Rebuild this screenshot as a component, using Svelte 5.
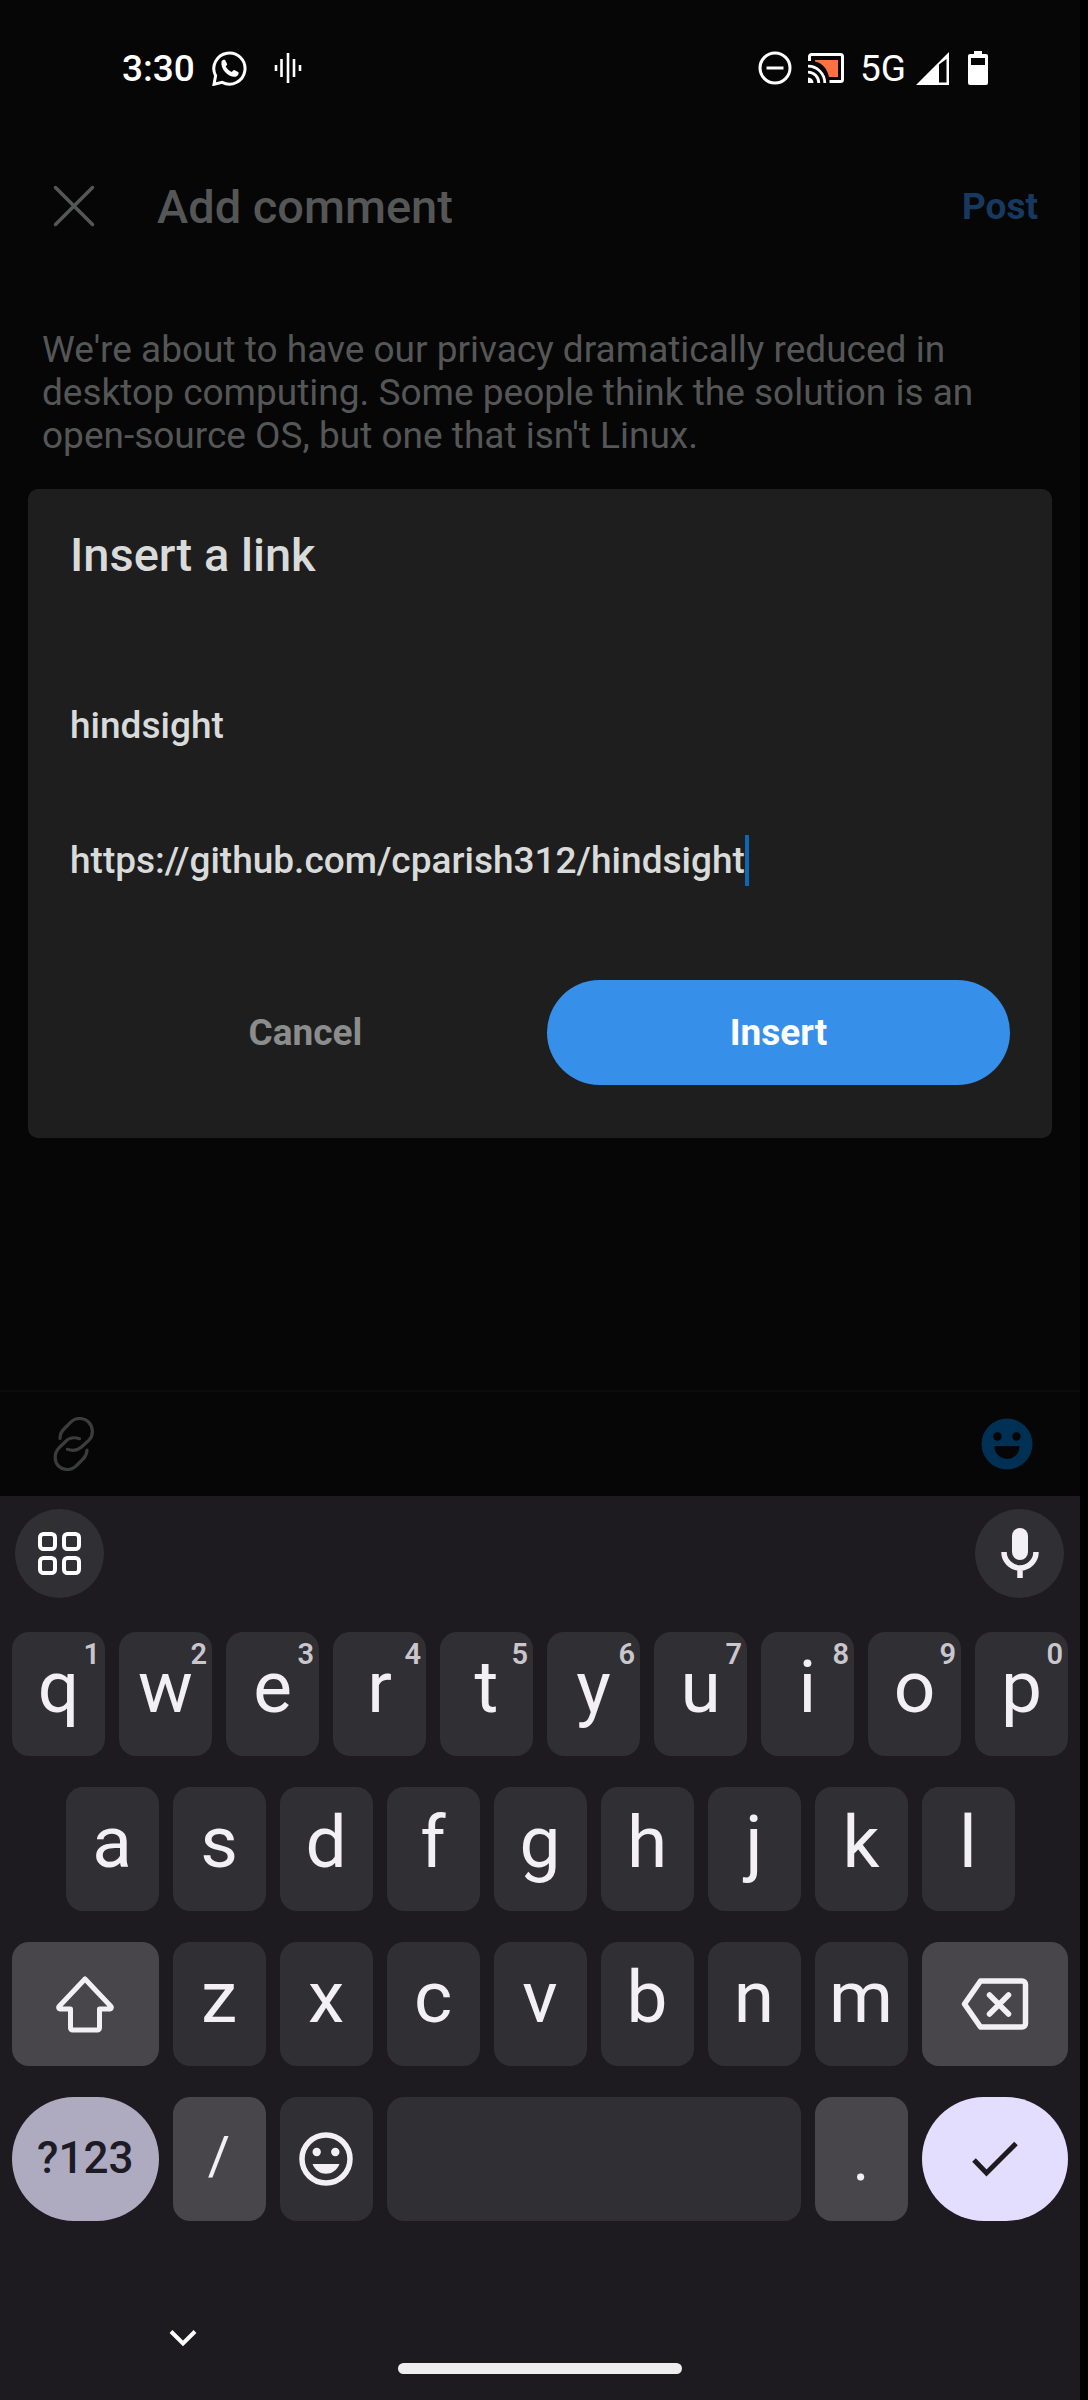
<script>
  const numberRow = [
    ['q', '1'], ['w', '2'], ['e', '3'], ['r', '4'], ['t', '5'],
    ['y', '6'], ['u', '7'], ['i', '8'], ['o', '9'], ['p', '0']
  ];
  const homeRow = ['a', 's', 'd', 'f', 'g', 'h', 'j', 'k', 'l'];
  const bottomRow = ['z', 'x', 'c', 'v', 'b', 'n', 'm'];

  let linkText = $state('hindsight');
  let linkUrl = $state('https://github.com/cparish312/hindsight');
  let comment = $state(
    "We're about to have our privacy dramatically reduced in desktop computing. Some people think the solution is an open-source OS, but one that isn't Linux."
  );
</script>

<div class="phone">
  <div class="app">
    <header class="status">
      <div class="status-group">
        <span class="clock">3:30</span>
        <svg class="whatsapp" width="36" height="36" viewBox="0 0 36 36" aria-hidden="true">
          <path d="M2 34.3 L3.6 25.8 A15.6 15.6 0 1 1 10.2 32.4 Z" fill="none" stroke="#fff" stroke-width="3" />
          <path d="M9.5 11.5c.8-1.8 2.6-2.2 3.6-1.6l2 4.2c.2.8-.8 1.800-1.400 2.500 1.500 2.700 3.300 4.300 6 5.500.8-.8 1.700-2.200 2.600-2l4.200 2.100c.6 2.600-1.500 4.400-4 4.600-6.500 0-14.300-7.800-13-15.300z" fill="#fff" />
        </svg>
        <svg width="28" height="32" viewBox="0 0 28 32" aria-hidden="true">
          <path d="M2 13v6M7.500 7v18M14 1v30M20 7v18M26 13v6" stroke="#fff" stroke-width="2.600" />
        </svg>
      </div>
      <div class="status-group end">
        <svg width="34" height="34" viewBox="0 0 34 34" aria-hidden="true">
          <circle cx="17" cy="17" r="15" fill="none" stroke="#fff" stroke-width="3" />
          <path d="M8.500 17h17" stroke="#fff" stroke-width="3" />
        </svg>
        <svg class="cast" width="36" height="30" viewBox="0 0 36 30" aria-hidden="true">
          <path d="M7 7h23v17h-9C19 15 14 10 7 8.500z" fill="#ff7043" />
          <path d="M1.500 8V3.500a2 2 0 0 1 2-2h29a2 2 0 0 1 2 2v23a2 2 0 0 1-2 2H21.500" fill="none" stroke="#fff" stroke-width="3" />
          <path d="M0 13.200A16.800 16.800 0 0 1 16.800 30M0 19.200A10.800 10.800 0 0 1 10.800 30" fill="none" stroke="#fff" stroke-width="2.800" />
          <path d="M0 24.500A5.500 5.500 0 0 1 5.500 30H0z" fill="#fff" />
        </svg>
        <span class="network">5G</span>
        <svg class="signal" width="33" height="33" viewBox="0 0 33 33" aria-hidden="true">
          <path d="M0 33 33 0v33z" fill="#fff" />
          <path d="M23 12.500 30.500 7v23.500H23z" fill="#060606" />
        </svg>
        <svg width="20" height="34" viewBox="0 0 20 34" aria-hidden="true">
          <path d="M6 0h8v3h4a2 2 0 0 1 2 2v27a2 2 0 0 1-2 2H2a2 2 0 0 1-2-2V5a2 2 0 0 1 2-2h4z" fill="#fff" />
          <path d="M3 7h14v7H3z" fill="#060606" />
        </svg>
      </div>
    </header>

    <div class="titlebar">
      <button class="plain" aria-label="Close">
        <svg width="42" height="42" viewBox="0 0 42 42">
          <path d="M2.500 2.500l37 37M39.500 2.500l-37 37" stroke="#555757" stroke-width="3.500" stroke-linecap="round" />
        </svg>
      </button>
      <h1>Add comment</h1>
      <button class="plain post">Post</button>
    </div>

    <textarea class="comment" aria-label="Comment" rows="3" bind:value={comment}></textarea>

    <footer class="tools">
      <button class="plain" aria-label="Add link">
        <svg width="42" height="54" viewBox="0 0 42 54" fill="none" stroke="#3b3c3c" stroke-width="3.200" stroke-linecap="round">
          <path d="M7 21.500C7 17 8.500 14.500 10.500 12.500L17.500 5.500C22.500 0 31 .5 35.500 5S41 18 36 23.200L28.500 30C24.500 33.500 19.500 34 14.500 32.300" />
          <path d="M34 33C33.800 37 32.500 39.500 30.500 41.500L23.500 48.500C18.500 54 10 53.500 5.500 49S1 36 6 30.800L12.500 24.500C16.500 20.500 21.500 20 26.500 21.700" />
        </svg>
      </button>
      <button class="plain" aria-label="Add emoji">
        <svg width="52" height="52" viewBox="0 0 52 52">
          <circle cx="26" cy="26" r="25.500" fill="#013055" />
          <circle cx="16.500" cy="18.500" r="4.200" fill="#060606" />
          <circle cx="35.500" cy="18.500" r="4.200" fill="#060606" />
          <path d="M13.500 28h25c0 17-25 17-25 0z" fill="#060606" />
        </svg>
      </button>
    </footer>

    <div class="overlay">
      <form class="dialog" role="dialog" aria-labelledby="dialog-title" onsubmit={(e) => e.preventDefault()}>
        <h2 id="dialog-title">Insert a link</h2>
        <div class="field">
          <input type="text" aria-label="Link name" bind:value={linkText} />
        </div>
        <div class="field">
          <input type="text" aria-label="Link address" bind:value={linkUrl} />
          <span class="caret"></span>
        </div>
        <div class="actions">
          <button type="button" class="cancel">Cancel</button>
          <button type="submit" class="insert">Insert</button>
        </div>
      </form>
    </div>
  </div>

  <div class="keyboard">
    <div class="strip">
      <button class="round" aria-label="Keyboard menu">
        <svg width="43" height="43" viewBox="0 0 43 43" fill="none" stroke="#fff" stroke-width="4">
          <rect x="2" y="2" width="15" height="15" rx="3.500" />
          <rect x="26" y="2" width="15" height="15" rx="3.500" />
          <rect x="2" y="26" width="15" height="15" rx="3.500" />
          <rect x="26" y="26" width="15" height="15" rx="3.500" />
        </svg>
      </button>
      <button class="round" aria-label="Voice input">
        <svg width="38" height="52" viewBox="0 0 38 52">
          <rect x="11" y="0" width="16" height="32" rx="8" fill="#f2eff5" />
          <path d="M3 24a16 16 0 0 0 32 0M19 40v10" fill="none" stroke="#f2eff5" stroke-width="5.500" />
        </svg>
      </button>
    </div>

    <div class="keys">
      {#each numberRow as [letter, hint]}
        <button class="key">{letter}<small>{hint}</small></button>
      {/each}

      {#each homeRow as letter, i}
        <button class="key" class:indent={i === 0}>{letter}</button>
      {/each}

      <button class="key wide mod shift" aria-label="Shift">
        <svg width="60" height="58" viewBox="0 0 60 58" fill="none" stroke="#f2eff5" stroke-width="5" stroke-linejoin="round">
          <path d="M30 4 56 31.500a1.500 1.500 0 0 1-1 2.500H44.500V53a2 2 0 0 1-2 2h-25a2 2 0 0 1-2-2V34H5a1.500 1.500 0 0 1-1-2.500z" />
        </svg>
      </button>
      {#each bottomRow as letter}
        <button class="key">{letter}</button>
      {/each}
      <button class="key wide mod icon" aria-label="Backspace">
        <svg width="68" height="52" viewBox="0 0 68 52" fill="none" stroke="#f2eff5" stroke-width="5.500" stroke-linejoin="round">
          <path d="M19.500 3H61a3.500 3.500 0 0 1 3.500 3.500v39A3.500 3.500 0 0 1 61 49H19.500L3.500 26z" />
          <path d="M28.500 17l19 19M47.500 17l-19 19" stroke-linecap="round" />
        </svg>
      </button>

      <button class="key wide symbols">?123</button>
      <button class="key mod slash">/</button>
      <button class="key icon" aria-label="Emoji">
        <svg width="54" height="54" viewBox="0 0 54 54">
          <circle cx="27" cy="27" r="24" fill="none" stroke="#f2eff5" stroke-width="5.500" />
          <circle cx="17.700" cy="20" r="4.200" fill="#f2eff5" />
          <circle cx="36.300" cy="20" r="4.200" fill="#f2eff5" />
          <path d="M13.500 32h27c-5 13-22 13-27 0z" fill="#f2eff5" />
        </svg>
      </button>
      <button class="key space" aria-label="Space"></button>
      <button class="key mod dot">.</button>
      <button class="key wide done" aria-label="Done">
        <svg width="46" height="36" viewBox="0 0 46 36">
          <path d="M2 19 14.500 32 44 2.500" fill="none" stroke="#1d1b20" stroke-width="5" />
        </svg>
      </button>
    </div>

    <div class="nav">
      <button class="plain hide" aria-label="Hide keyboard">
        <svg width="28" height="18" viewBox="0 0 28 18">
          <path d="M2 2.500 14 14.500 26 2.500" fill="none" stroke="#fff" stroke-width="4" />
        </svg>
      </button>
      <div class="pill"></div>
    </div>
  </div>
</div>

<style>
  :global(body) {
    background: #000;
  }

  .phone {
    display: flex;
    flex-direction: column;
    box-sizing: border-box;
    min-height: 100vh;
    padding-right: 8px;
    font-family: Roboto, 'Liberation Sans', sans-serif;
  }

  button,
  input,
  textarea {
    margin: 0;
    padding: 0;
    border: 0;
    background: none;
    font-family: inherit;
    outline: none;
  }

  svg {
    display: block;
    flex: none;
  }

  .app {
    position: relative;
    display: flex;
    flex: 1;
    flex-direction: column;
    background: #060606;
  }

  .status {
    display: flex;
    align-items: center;
    justify-content: space-between;
    height: 136px;
    padding: 0 92px 0 122px;
    color: #fff;
  }

  .status-group {
    display: flex;
    align-items: center;
    font-size: 37px;
    font-weight: 500;
  }

  .whatsapp {
    margin: 0 26px 0 17px;
  }

  .network {
    font-weight: 400;
  }

  .cast {
    margin: 0 16px;
  }

  .signal {
    margin: 0 19px 0 10px;
  }

  .titlebar {
    display: flex;
    align-items: center;
    height: 140px;
    padding: 0 42px 0 53px;
  }

  h1 {
    flex: 1;
    margin: 0 0 0 62px;
    color: #555757;
    font-size: 47px;
    font-weight: 500;
  }

  .plain {
    display: block;
  }

  .post {
    color: #17395f;
    font-size: 37px;
    font-weight: 700;
  }

  .comment {
    flex: 1;
    margin: 52px 42px 0;
    overflow: hidden;
    color: #555757;
    font-size: 37px;
    line-height: 43px;
    resize: none;
  }

  .tools {
    display: flex;
    align-items: center;
    justify-content: space-between;
    height: 104px;
    padding: 0 47px 0 53px;
    border-top: 2px solid #0b0b0b;
  }

  .overlay {
    position: absolute;
    inset: 130px 28px 0;
    display: flex;
    align-items: center;
  }

  .dialog {
    flex: 1;
    padding: 36px 42px 53px;
    border-radius: 10px;
    background: #1e1e1e;
  }

  h2 {
    margin: 0 0 89px;
    color: #d9dada;
    font-size: 47px;
    font-weight: 500;
    line-height: 60px;
  }

  .field {
    display: flex;
    align-items: center;
    height: 103px;
    margin-bottom: 32px;
  }

  .field input {
    max-width: 100%;
    height: 52px;
    color: #d9dada;
    font-size: 37px;
    font-weight: 500;
    field-sizing: content;
  }

  .caret {
    width: 4px;
    height: 51px;
    background: #0b68b6;
  }

  .actions {
    display: grid;
    grid-template-columns: 1fr 1fr;
    gap: 10px;
    margin-top: 68px;
    padding-left: 4px;
  }

  .actions button {
    height: 105px;
    border-radius: 53px;
    font-size: 37px;
    font-weight: 700;
  }

  .cancel {
    color: #8b8c8c;
  }

  .insert {
    background: #368fe9;
    color: #fff;
  }

  .keyboard {
    background: #1d1b20;
  }

  .strip {
    display: flex;
    justify-content: space-between;
    padding: 13px 16px 34px 15px;
  }

  .round {
    display: flex;
    align-items: center;
    justify-content: center;
    width: 89px;
    height: 89px;
    border-radius: 50%;
    background: #302f34;
  }

  .keys {
    display: grid;
    grid-template-columns: repeat(20, 1fr);
    grid-auto-rows: 124px;
    gap: 31px 14px;
    padding: 0 12px;
  }

  .key {
    position: relative;
    display: flex;
    grid-column: span 2;
    align-items: center;
    justify-content: center;
    padding-bottom: 14px;
    border-radius: 17px;
    background: #302f34;
    color: #f2eff5;
    font-size: 73px;
    line-height: 86px;
  }

  .key small {
    position: absolute;
    top: 7px;
    right: 5px;
    color: #c9c6cd;
    font-size: 29px;
    font-weight: 600;
    line-height: 30px;
  }

  .indent {
    grid-column: 2 / span 2;
  }

  .wide {
    grid-column: span 3;
  }

  .mod {
    background: #48454b;
  }

  .icon,
  .done,
  .shift {
    padding-bottom: 0;
  }

  .symbols,
  .done {
    border-radius: 62px;
  }

  .symbols {
    background: #aeaac0;
    color: #1d1b25;
    font-size: 44px;
    font-weight: 500;
    padding-bottom: 2px;
  }

  .slash {
    font-size: 54px;
    padding-bottom: 6px;
  }

  .dot {
    font-size: 64px;
    padding-bottom: 0;
  }

  .space {
    grid-column: span 8;
  }

  .done {
    background: #e4defe;
  }

  .nav {
    padding: 108px 0 26px;
  }

  .hide {
    margin: 0 0 16px 169px;
  }

  .pill {
    width: 284px;
    height: 11px;
    margin: 0 auto;
    border-radius: 6px;
    background: #eee;
  }
</style>
